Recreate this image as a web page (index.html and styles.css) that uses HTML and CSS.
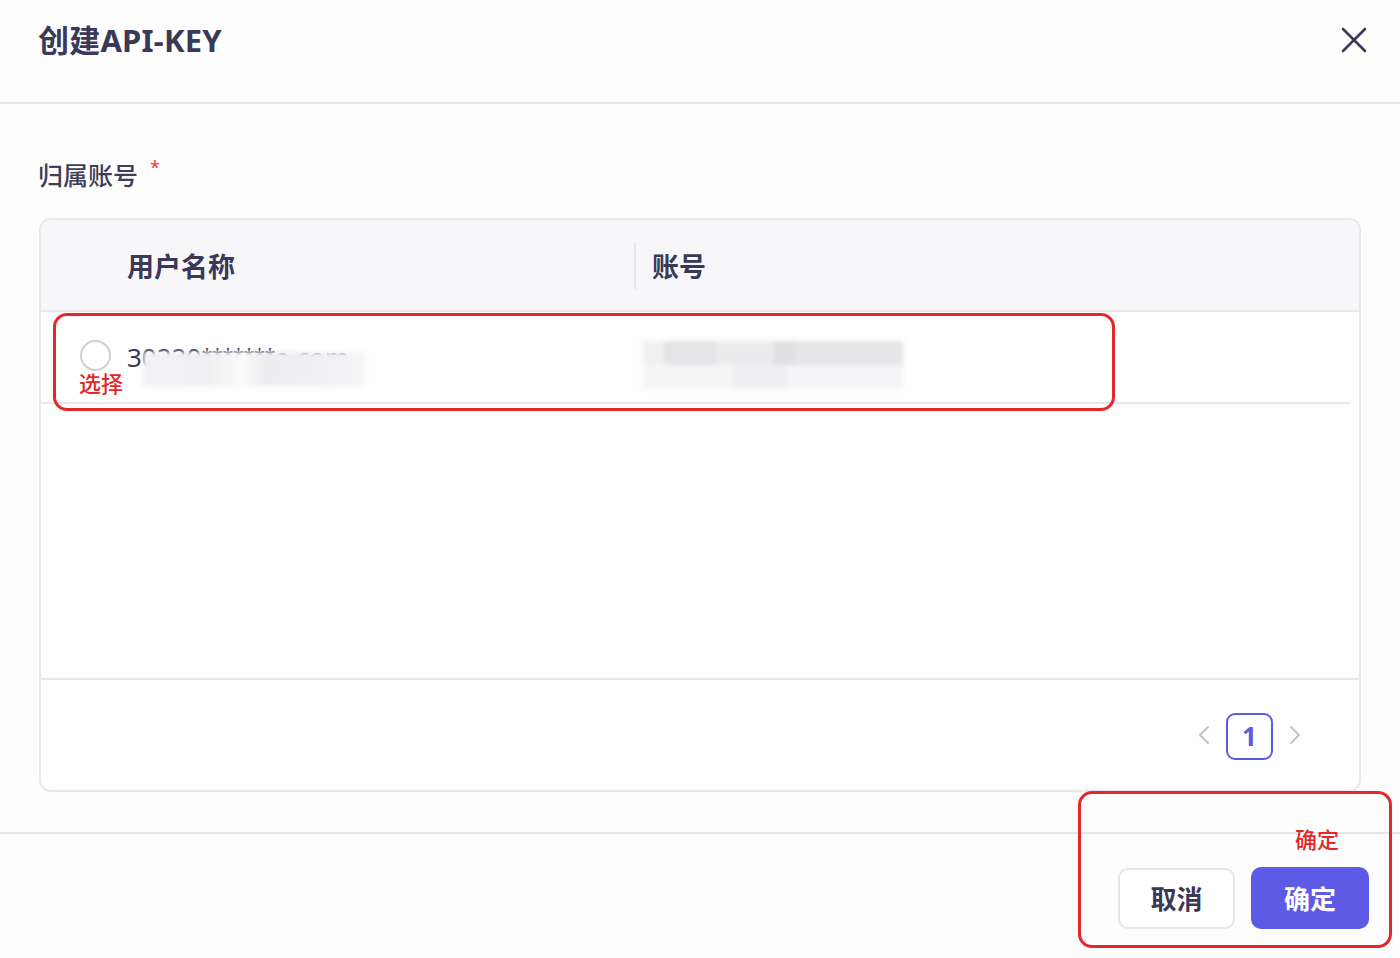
FILE: index.html
```html
<!DOCTYPE html>
<html lang="zh">
<head>
<meta charset="utf-8">
<title>创建API-KEY</title>
<link rel="stylesheet" href="styles.css">
</head>
<body>
<div class="modal">
  <header class="modal-header">
    <h1 class="modal-title">创建API-KEY</h1>
    <button class="close-btn" aria-label="关闭">
      <svg width="26" height="26" viewBox="0 0 26 26"><path d="M2 2L24 24M24 2L2 24" stroke="#3b3958" stroke-width="2.6" stroke-linecap="round" fill="none"/></svg>
    </button>
  </header>

  <section class="modal-body">
    <div class="field-label">归属账号<span class="required">*</span></div>

    <div class="table">
      <div class="thead">
        <div class="th th-name">用户名称</div>
        <div class="th th-account"><span class="sep"></span>账号</div>
      </div>
      <div class="tbody">
        <div class="row">
          <div class="cell cell-name">
            <span class="radio"></span>
            <span class="name-text">30220<span class="stars">*******</span>e.com</span>
            <span class="blur blur-a"></span>
          </div>
          <div class="cell cell-account">
            <span class="blur blur-b"></span>
          </div>
        </div>
      </div>
      <div class="tfoot">
        <span class="chev">
          <svg width="12" height="20" viewBox="0 0 12 20"><path d="M10 2L2 10L10 18" stroke="#c4c4c8" stroke-width="2" fill="none" stroke-linecap="round" stroke-linejoin="round"/></svg>
        </span>
        <span class="page-num">1</span>
        <span class="chev">
          <svg width="12" height="20" viewBox="0 0 12 20"><path d="M2 2L10 10L2 18" stroke="#c4c4c8" stroke-width="2" fill="none" stroke-linecap="round" stroke-linejoin="round"/></svg>
        </span>
      </div>
    </div>
  </section>

  <footer class="modal-footer">
    <button class="btn btn-cancel">取消</button>
    <button class="btn btn-primary">确定</button>
  </footer>

  <div class="mark mark-row"><span class="mark-text mark-text-row">选择</span></div>
  <div class="mark mark-footer"><span class="mark-text mark-text-footer">确定</span></div>
</div>
</body>
</html>
```

FILE: styles.css
```css
* { box-sizing: border-box; }
html, body { margin: 0; padding: 0; }
body {
  background: #ffffff;
  font-family: "Noto Sans", "Noto Sans CJK SC", sans-serif;
  color: #3b3958;
}
.modal {
  position: relative;
  width: 1400px;
  height: 958px;
  background: #fdfdfd;
  overflow: hidden;
}
.modal-header {
  height: 104px;
  border-bottom: 2px solid #e6e6e9;
  display: flex;
  align-items: flex-start;
  justify-content: space-between;
  padding: 20px 33px 0 38px;
}
.modal-title {
  margin: 0;
  font-size: 31px;
  line-height: 40px;
  font-weight: 700;
  color: #3b3958;
  letter-spacing: 0.2px;
}
.close-btn {
  background: none;
  border: none;
  padding: 0;
  margin-top: 7px;
  width: 26px;
  height: 26px;
  cursor: pointer;
}
.modal-body {
  padding: 54px 39px 0 39px;
  height: 730px;
  border-bottom: 2px solid #e6e6e9;
}
.field-label {
  font-size: 25px;
  line-height: 34px;
  color: #3f3d58;
  margin-left: -1px;
  font-weight: 500;
}
.required {
  color: #f04848;
  font-size: 18px;
  vertical-align: top;
  margin-left: 12px;
  position: relative;
  top: -8px;
}
.table {
  margin-top: 26px;
  width: 1322px;
  height: 574px;
  border: 2px solid #e8e8ec;
  border-radius: 12px;
  overflow: hidden;
  display: flex;
  flex-direction: column;
  background: #fefefe;
}
.thead {
  height: 92px;
  background: #f7f7f9;
  display: flex;
  align-items: center;
  border-bottom: 2px solid #e8e8ec;
}
.th {
  font-size: 27px;
  font-weight: 700;
  color: #3b3958;
  display: flex;
  align-items: center;
}
.th-name { width: 593px; padding-left: 86px; }
.th-account { position: relative; padding-left: 18px; }
.sep {
  position: absolute;
  left: 0;
  top: 50%;
  margin-top: -22px;
  width: 2px;
  height: 46px;
  background: #e6e6ea;
}
.tbody {
  flex: 1;
  border-bottom: 2px solid #e8e8ec;
}
.row {
  height: 92px;
  border-bottom: 2px solid #e8e8ec;
  margin-right: 8px;
  display: flex;
  align-items: center;
}
.cell { position: relative; display: flex; align-items: center; }
.cell-name { width: 593px; padding-left: 39px; height: 100%; }
.cell-account { flex: 1; height: 100%; }
.radio {
  width: 31px;
  height: 31px;
  border: 2px solid #cfcfd4;
  border-radius: 50%;
  background: #fff;
  margin-right: 16px;
  position: relative;
  top: -2px;
}
.name-text {
  font-size: 26px;
  color: #3b3958;
  white-space: nowrap;
}
.stars {
  font-size: 20px;
  letter-spacing: -0.5px;
  position: relative;
  top: -4px;
}
.blur {
  position: absolute;
  filter: blur(2px);
}
.blur-a {
  left: 102px;
  top: 40px;
  width: 222px;
  height: 34px;
  background: linear-gradient(90deg, #f2f2f4 0%, #f0f0f2 30%, #fafafa 45%, #ededf0 55%, #f0f0f2 80%, #f6f6f8 100%);
}
.blur-b {
  left: 9px;
  top: 29px;
  width: 260px;
  height: 48px;
  background:
    linear-gradient(90deg, #f0f0f2 0 8%, #e4e4e7 8% 28%, #ececee 28% 50%, #e0e0e3 50% 58%, #e6e6e9 58% 100%) top / 100% 24px no-repeat,
    linear-gradient(90deg, #f5f5f6 0 35%, #efeff1 35% 55%, #f5f5f7 55% 100%) bottom / 100% 24px no-repeat;
}
.tfoot {
  height: 110px;
  display: flex;
  align-items: center;
  justify-content: flex-end;
  padding-right: 58px;
  gap: 16px;
}
.chev { display: flex; align-items: center; width: 12px; }
.page-num {
  width: 47px;
  height: 47px;
  border: 2px solid #5d5be2;
  border-radius: 9px;
  color: #5d5be2;
  font-size: 26px;
  font-weight: 700;
  display: flex;
  align-items: center;
  justify-content: center;
  margin-top: 2px;
}
.modal-footer {
  display: flex;
  justify-content: flex-end;
  align-items: center;
  gap: 16px;
  padding: 33px 31px 0 0;
}
.btn {
  height: 62px;
  border-radius: 10px;
  font-family: "Noto Sans", "Noto Sans CJK SC", sans-serif;
  font-size: 26px;
  font-weight: 700;
  cursor: pointer;
}
.btn-cancel {
  width: 117px;
  height: 61px;
  background: #fff;
  border: 2px solid #e6e6ea;
  color: #3b3958;
}
.btn-primary {
  width: 118px;
  background: #5d5be6;
  border: none;
  color: #fff;
}
.mark {
  position: absolute;
  border: 3px solid #e3282a;
  border-radius: 14px;
}
.mark-row { left: 53px; top: 313px; width: 1062px; height: 98px; }
.mark-footer { left: 1078px; top: 791px; width: 314px; height: 157px; }
.mark-text {
  position: absolute;
  color: #e3282a;
  font-size: 22px;
  line-height: 24px;
  font-weight: 500;
}
.mark-text-row { left: 23px; top: 55px; }
.mark-text-footer { left: 214px; top: 33px; }
```
